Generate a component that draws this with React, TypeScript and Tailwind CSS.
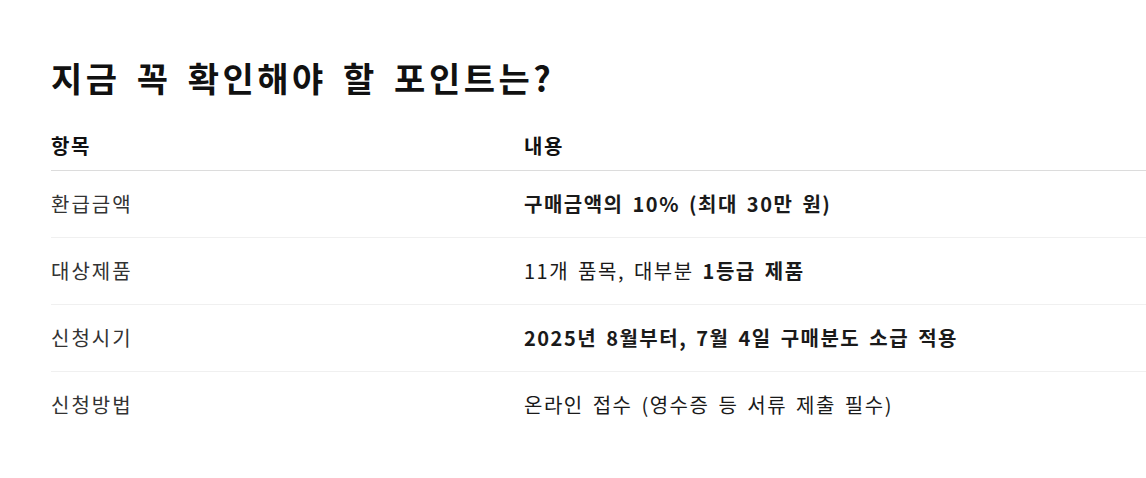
import React from 'react';

const font = { fontFamily: '"Noto Sans CJK KR", "Noto Sans", sans-serif' };

type Row = { label: string; value: React.ReactNode };

const rows: Row[] = [
    { label: '환급금액', value: <strong className="font-bold">구매금액의 10% (최대 30만 원)</strong> },
    {
        label: '대상제품',
        value: (
            <>
                11개 품목, 대부분 <strong className="font-bold">1등급 제품</strong>
            </>
        ),
    },
    {
        label: '신청시기',
        value: (
            <strong className="font-bold">2025년 8월부터, 7월 4일 구매분도 소급 적용</strong>
        ),
    },
    { label: '신청방법', value: '온라인 접수 (영수증 등 서류 제출 필수)' },
];

export default function App() {
    return (
        <div className="w-[1146px] h-[478px] bg-white overflow-hidden pl-[51px] pt-[54px] text-[#111]" style={font}>
            <h2 className="text-[34px] font-bold leading-[48px] tracking-[3.5px] [word-spacing:5px]">지금 꼭 확인해야 할 포인트는?</h2>
            <table className="mt-[22px] w-[1100px] border-collapse text-[20px] tracking-[1.5px] [word-spacing:3px]">
                <thead>
                    <tr className="border-b border-[#dcdcdc]">
                        <th className="w-[473px] h-[46px] text-left font-bold pb-[2px]">항목</th>
                        <th className="text-left font-bold pb-[2px]">내용</th>
                    </tr>
                </thead>
                <tbody>
                    {rows.map((r, i) => (
                        <tr key={r.label} className={i < rows.length - 1 ? 'border-b border-[#f0f0f0]' : ''}>
                            <td className="h-[67px] text-[#333] tracking-[2px]">{r.label}</td>
                            <td className="text-[#1a1a1a]">{r.value}</td>
                        </tr>
                    ))}
                </tbody>
            </table>
        </div>
    );
}
